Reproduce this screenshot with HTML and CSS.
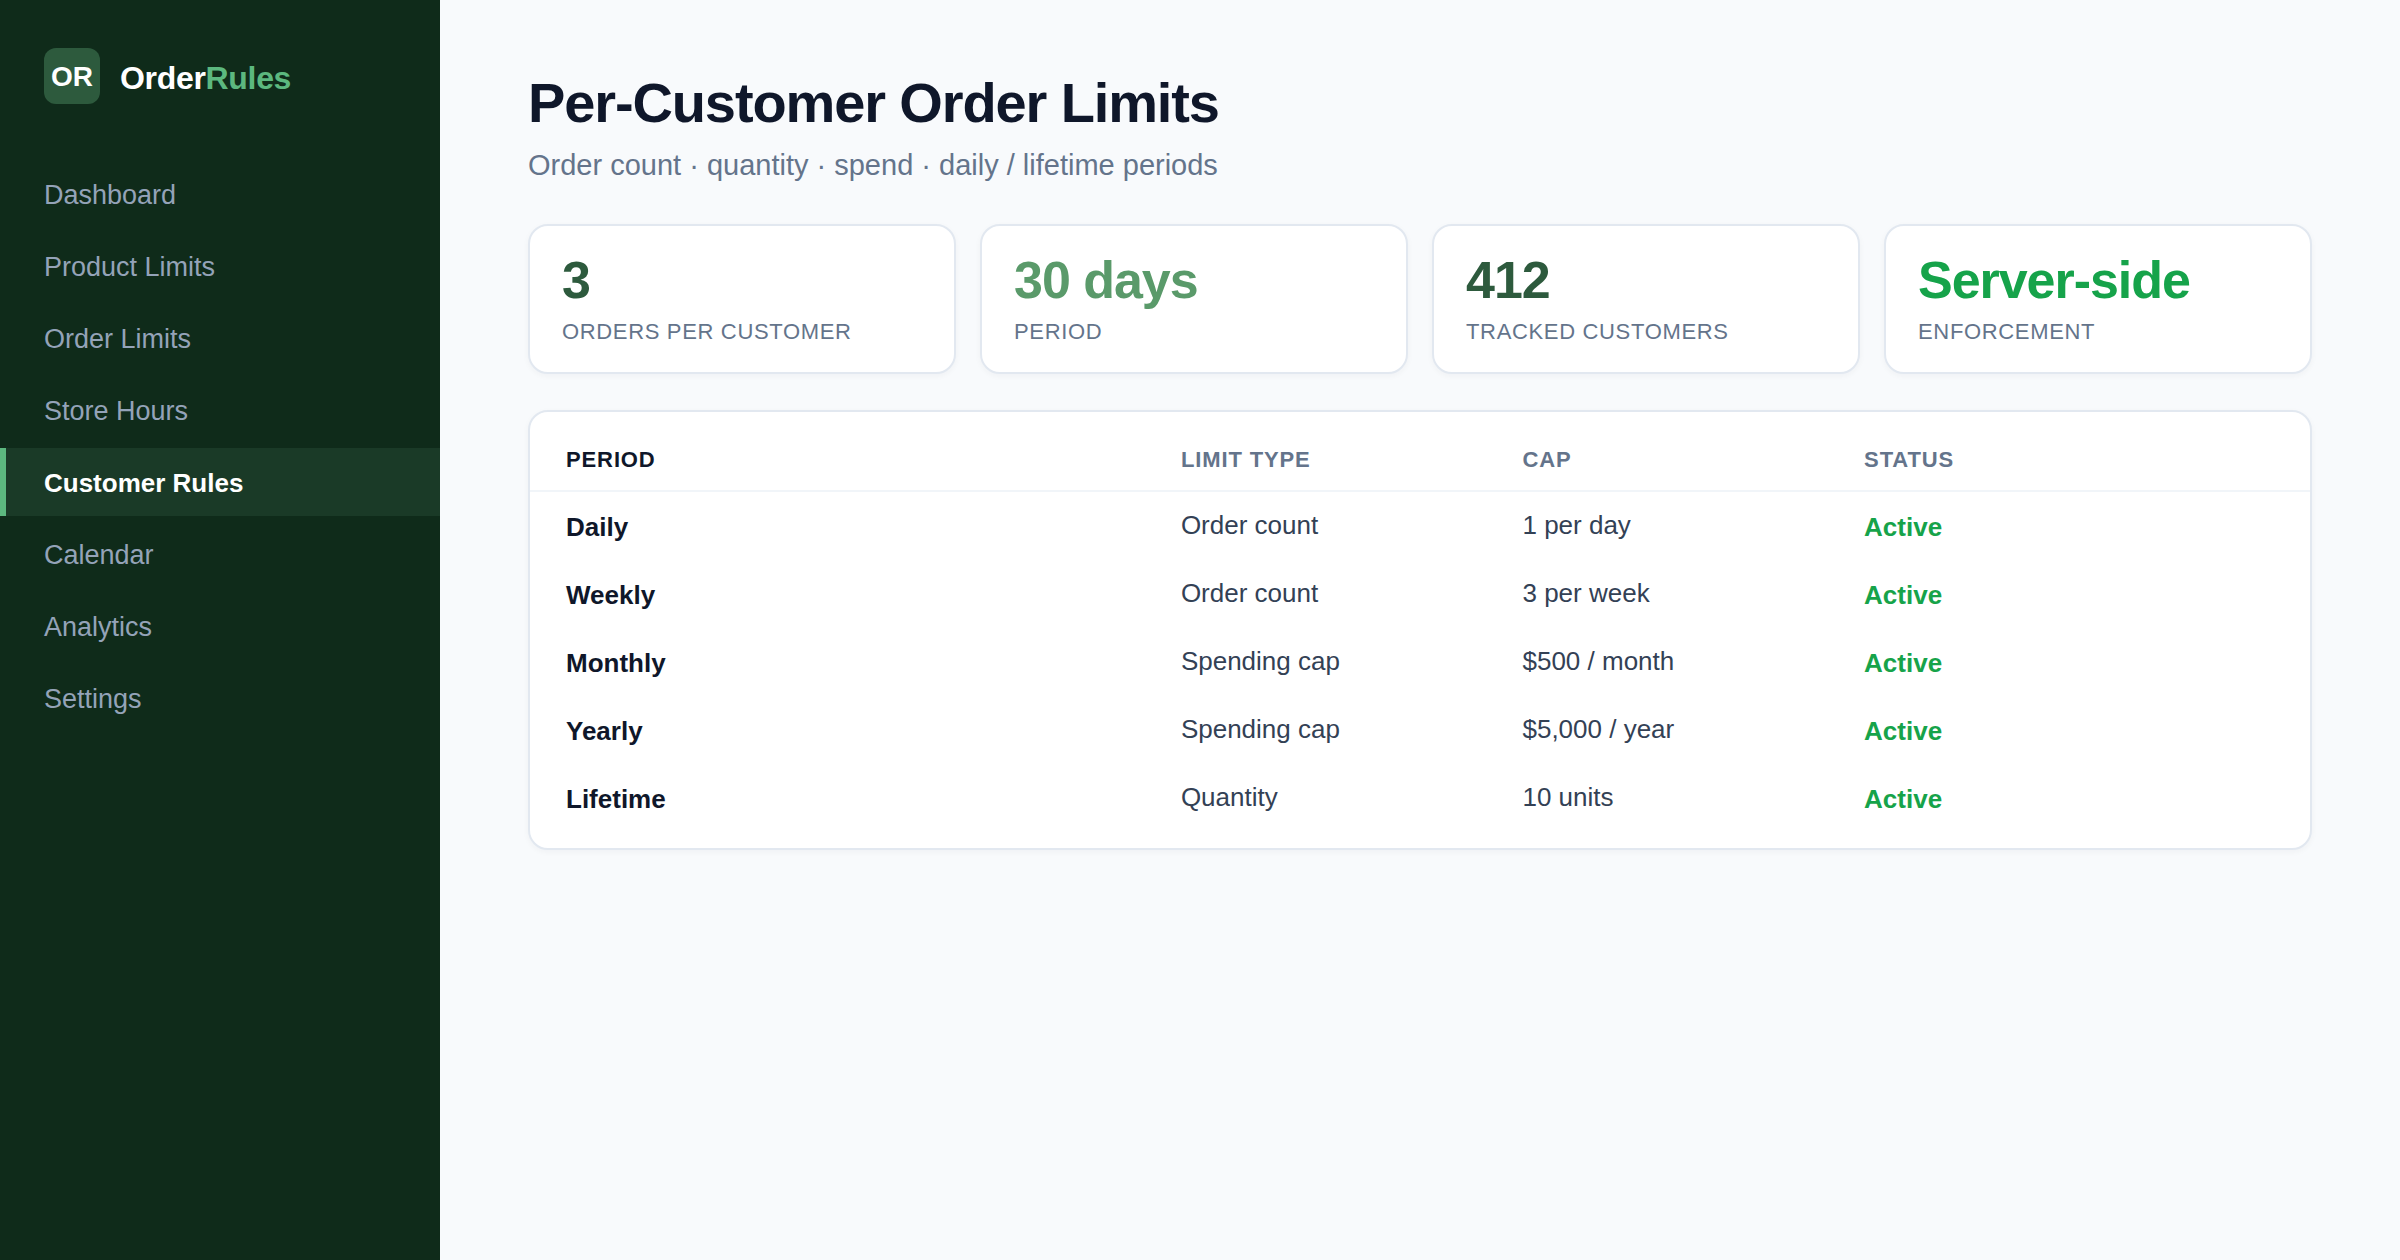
FILE: index.html
```html
<!DOCTYPE html>
<html lang="en">
<head>
    <meta charset="UTF-8">
    <meta name="viewport" content="width=device-width, initial-scale=1.0">
    <title>Per-Customer Order Limits - OrderRules</title>
    <link rel="stylesheet" href="styles.css">
</head>
<body>
    <!-- Sidebar -->
    <aside class="sidebar">
        <div class="logo">
            <span class="logo-mark">OR</span>
            <span class="logo-text">Order<span class="logo-accent">Rules</span></span>
        </div>
        <nav class="nav">
            <a href="#" class="nav-link">Dashboard</a>
            <a href="#" class="nav-link">Product Limits</a>
            <a href="#" class="nav-link">Order Limits</a>
            <a href="#" class="nav-link">Store Hours</a>
            <a href="#" class="nav-link active">Customer Rules</a>
            <a href="#" class="nav-link">Calendar</a>
            <a href="#" class="nav-link">Analytics</a>
            <a href="#" class="nav-link">Settings</a>
        </nav>
    </aside>

    <!-- Main Content -->
    <main class="main-content">
        <h1>Per-Customer Order Limits</h1>
        <p class="subtitle">Order count · quantity · spend · daily / lifetime periods</p>

        <section class="stats">
            <div class="card stat">
                <div class="stat-value">3</div>
                <div class="stat-label">Orders per customer</div>
            </div>
            <div class="card stat">
                <div class="stat-value light">30 days</div>
                <div class="stat-label">Period</div>
            </div>
            <div class="card stat">
                <div class="stat-value">412</div>
                <div class="stat-label">Tracked customers</div>
            </div>
            <div class="card stat">
                <div class="stat-value success">Server-side</div>
                <div class="stat-label">Enforcement</div>
            </div>
        </section>

        <!-- Limits table -->
        <div class="card">
            <table class="limits">
                <thead>
                    <tr>
                        <th scope="col">Period</th>
                        <th scope="col">Limit type</th>
                        <th scope="col">Cap</th>
                        <th scope="col">Status</th>
                    </tr>
                </thead>
                <tbody>
                    <tr>
                        <th scope="row">Daily</th>
                        <td>Order count</td>
                        <td>1 per day</td>
                        <td class="status">Active</td>
                    </tr>
                    <tr>
                        <th scope="row">Weekly</th>
                        <td>Order count</td>
                        <td>3 per week</td>
                        <td class="status">Active</td>
                    </tr>
                    <tr>
                        <th scope="row">Monthly</th>
                        <td>Spending cap</td>
                        <td>$500 / month</td>
                        <td class="status">Active</td>
                    </tr>
                    <tr>
                        <th scope="row">Yearly</th>
                        <td>Spending cap</td>
                        <td>$5,000 / year</td>
                        <td class="status">Active</td>
                    </tr>
                    <tr>
                        <th scope="row">Lifetime</th>
                        <td>Quantity</td>
                        <td>10 units</td>
                        <td class="status">Active</td>
                    </tr>
                </tbody>
            </table>
        </div>
    </main>
</body>
</html>
```
FILE: styles.css
```css
* {
    margin: 0;
    padding: 0;
    box-sizing: border-box;
}

body {
    display: flex;
    min-height: 100vh;
    background-color: #f8fafc;
    color: #0f172a;
    font-family: "Helvetica Neue", "Liberation Sans", Arial, sans-serif;
    font-size: 26px;
}

/* Sidebar styles */
.sidebar {
    flex: 0 0 440px;
    padding-top: 48px;
    background-color: #0f2b1a;
}

.logo {
    display: flex;
    align-items: center;
    gap: 20px;
    padding: 0 44px;
    margin-bottom: 56px;
    color: #fff;
    font-weight: bold;
}

.logo-mark {
    display: flex;
    align-items: center;
    justify-content: center;
    width: 56px;
    height: 56px;
    padding-top: 2px;
    border-radius: 12px;
    background-color: #2d5a3d;
    font-size: 28px;
}

.logo-text {
    padding-top: 4px;
    font-size: 32px;
    letter-spacing: -0.01em;
}

.logo-accent {
    color: #5cb87f;
}

.nav {
    display: flex;
    flex-direction: column;
    gap: 4px;
}

.nav-link {
    padding: 2px 44px 0 38px;
    border-left: 6px solid transparent;
    color: #94a3b8;
    font-size: 27px;
    line-height: 66px;
    text-decoration: none;
}

.nav-link.active {
    border-left-color: #5cb87f;
    background-color: #1a3a27;
    color: #fff;
    font-size: 26px;
    font-weight: bold;
}

/* Main content */
.main-content {
    flex: 1;
    padding: 72px 88px;
}

h1 {
    font-size: 56px;
    line-height: 62px;
    letter-spacing: -0.02em;
}

.subtitle {
    margin: 14px 0 42px;
    color: #64748b;
    font-size: 29px;
    line-height: 34px;
}

.card {
    border: 2px solid #e2e8f0;
    border-radius: 20px;
    background-color: #fff;
    box-shadow: 0 2px 6px rgba(15, 23, 42, 0.04);
}

/* Stats */
.stats {
    display: grid;
    grid-template-columns: repeat(4, 1fr);
    gap: 24px;
    margin-bottom: 36px;
}

.stat {
    padding: 24px 32px 28px;
}

.stat-value {
    color: #2d5a3d;
    font-size: 52px;
    font-weight: bold;
    line-height: 60px;
    letter-spacing: -0.02em;
}

.stat-value.light {
    color: #5a9a6a;
}

.stat-value.success {
    color: #16a34a;
}

.stat-label {
    margin-top: 10px;
    color: #64748b;
    font-size: 22px;
    line-height: 24px;
    letter-spacing: 0.03em;
    text-transform: uppercase;
}

/* Limits table */
.limits {
    display: block;
    padding: 16px 0;
}

.limits thead,
.limits tbody {
    display: block;
}

.limits tr {
    display: grid;
    grid-template-columns: 1.8fr 1fr 1fr 1.2fr;
    padding: 0 36px;
    line-height: 66px;
}

.limits th {
    padding-top: 2px;
    text-align: left;
}

.limits td {
    padding-bottom: 2px;
    color: #334155;
}

.limits thead tr {
    border-bottom: 2px solid #f1f5f9;
    color: #64748b;
    font-size: 22px;
    line-height: 60px;
    letter-spacing: 0.04em;
    text-transform: uppercase;
}

.limits thead th:first-child {
    color: #0f172a;
}

.limits .status {
    padding: 2px 0 0;
    color: #16a34a;
    font-weight: bold;
}
```
